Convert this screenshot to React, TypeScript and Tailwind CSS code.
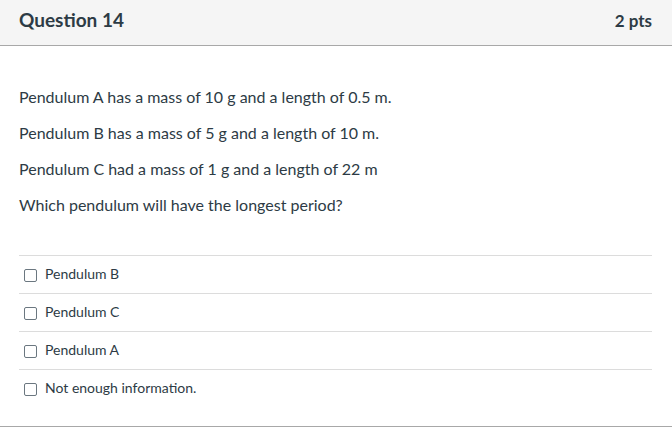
import React from "react";

const options = ["Pendulum B", "Pendulum C", "Pendulum A", "Not enough information."];

export default function App() {
  return (
    <div className="w-[672px] h-[429px] bg-white overflow-hidden" style={{ fontFamily: "Lato, 'Liberation Sans', sans-serif" }}>
      <div className="h-[46px] bg-[#f5f5f5] border-b border-[#a8a8a8] flex items-center justify-between px-[19px] pb-[4px]">
        <div className="text-[19px] font-bold text-[#2d3b45]">Question 14</div>
        <div className="text-[17px] font-bold text-[#2d3b45] pr-[1px]">2 pts</div>
      </div>
      <div className="h-[381px] border-b border-[#a8a8a8] flex flex-col">
        <div className="px-[19px] pt-[41px] text-[16px] text-[#2d3b45] flex flex-col gap-[16px] leading-[20px]">
          <p>Pendulum A has a mass of 10 g and a length of 0.5 m.</p>
          <p>Pendulum B has a mass of 5 g and a length of 10 m.</p>
          <p>Pendulum C had a mass of 1 g and a length of 22 m</p>
          <p>Which pendulum will have the longest period?</p>
        </div>
        <div className="mt-[40px] ml-[19px] mr-[20px]">
          {options.map((o) => (
            <div key={o} className="h-[38px] border-t border-[#dcdcdc] flex items-center pl-[5px] gap-[8px] pb-[2px]">
              <div className="w-[13px] h-[13px] border border-[#6b7780] rounded-[2px] bg-white mt-[3px]" />
              <span className="text-[14px] text-[#2d3b45]">{o}</span>
            </div>
          ))}
        </div>
      </div>
    </div>
  );
}
